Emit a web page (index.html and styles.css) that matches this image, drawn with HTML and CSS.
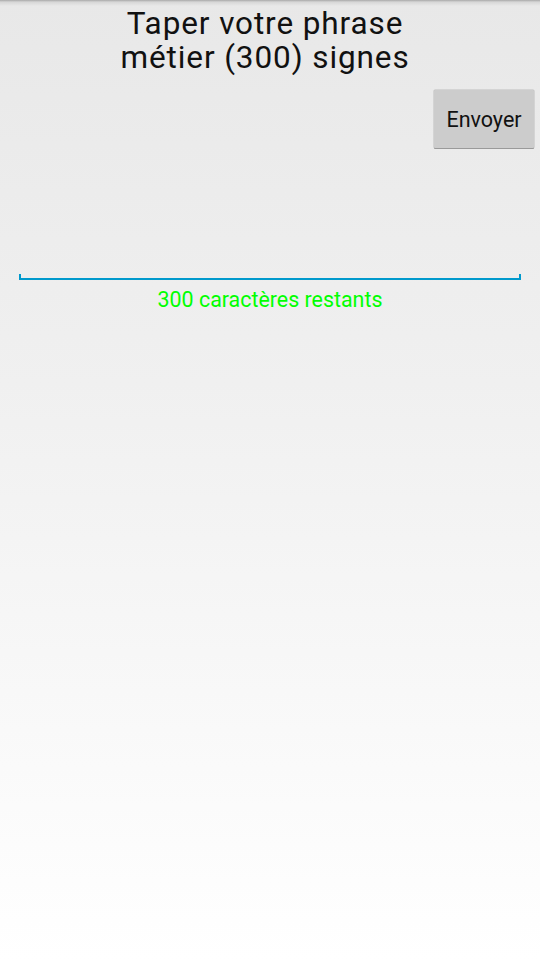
FILE: index.html
```html
<!DOCTYPE html>
<html lang="fr">
<head>
<meta charset="utf-8">
<title>Phrase métier</title>
<link rel="stylesheet" href="styles.css">
</head>
<body>
<div class="screen">
  <h1 class="title"><span class="line">Taper votre phrase</span><span class="line">métier (300) signes</span></h1>
  <div class="actions">
    <button class="send" type="button">Envoyer</button>
  </div>
  <div class="field"></div>
  <p class="counter">300 caractères restants</p>
</div>
</body>
</html>
```
FILE: styles.css
```css
html, body {
  margin: 0;
  padding: 0;
  height: 100%;
}
body {
  font-family: Roboto, "Noto Sans", sans-serif;
  background: linear-gradient(to bottom, #e8e8e8 0%, #f0f0f0 40%, #ffffff 100%);
}
.screen {
  position: relative;
  height: 960px;
  box-sizing: border-box;
  display: flex;
  flex-direction: column;
}
.screen::before {
  content: "";
  position: absolute;
  left: 0;
  right: 0;
  top: 0;
  height: 6px;
  background: linear-gradient(to bottom, #a8a8a8 0px, #d6d6d6 2px, rgba(232,232,232,0) 6px);
}
.title {
  margin: 7px 0 0 0;
  padding-right: 10px;
  font-weight: 400;
  font-size: 31.5px;
  letter-spacing: 0.9px;
  color: #111;
  text-align: center;
  display: flex;
  flex-direction: column;
}
.line {
  display: block;
  height: 34px;
  line-height: 34px;
}
.actions {
  display: flex;
  justify-content: flex-end;
  padding-right: 6px;
  margin-top: 15px;
}
.send {
  width: 100px;
  height: 58px;
  border: none;
  border-radius: 1px;
  background: #cccccc;
  box-shadow: 0 1px 0 #9a9a9a, 0 0 0 0.5px #bdbdbd;
  font-family: Roboto, "Noto Sans", sans-serif;
  font-size: 21.5px;
  color: #111;
  padding: 0;
}
.field {
  margin: 126px 19px 0 19px;
  height: 6px;
  border: 2px solid #0099cc;
  border-top: none;
  box-sizing: border-box;
}
.counter {
  margin: 7px 0 0 0;
  text-align: center;
  font-size: 21.4px;
  line-height: 25px;
  color: #00ff00;
}
```
